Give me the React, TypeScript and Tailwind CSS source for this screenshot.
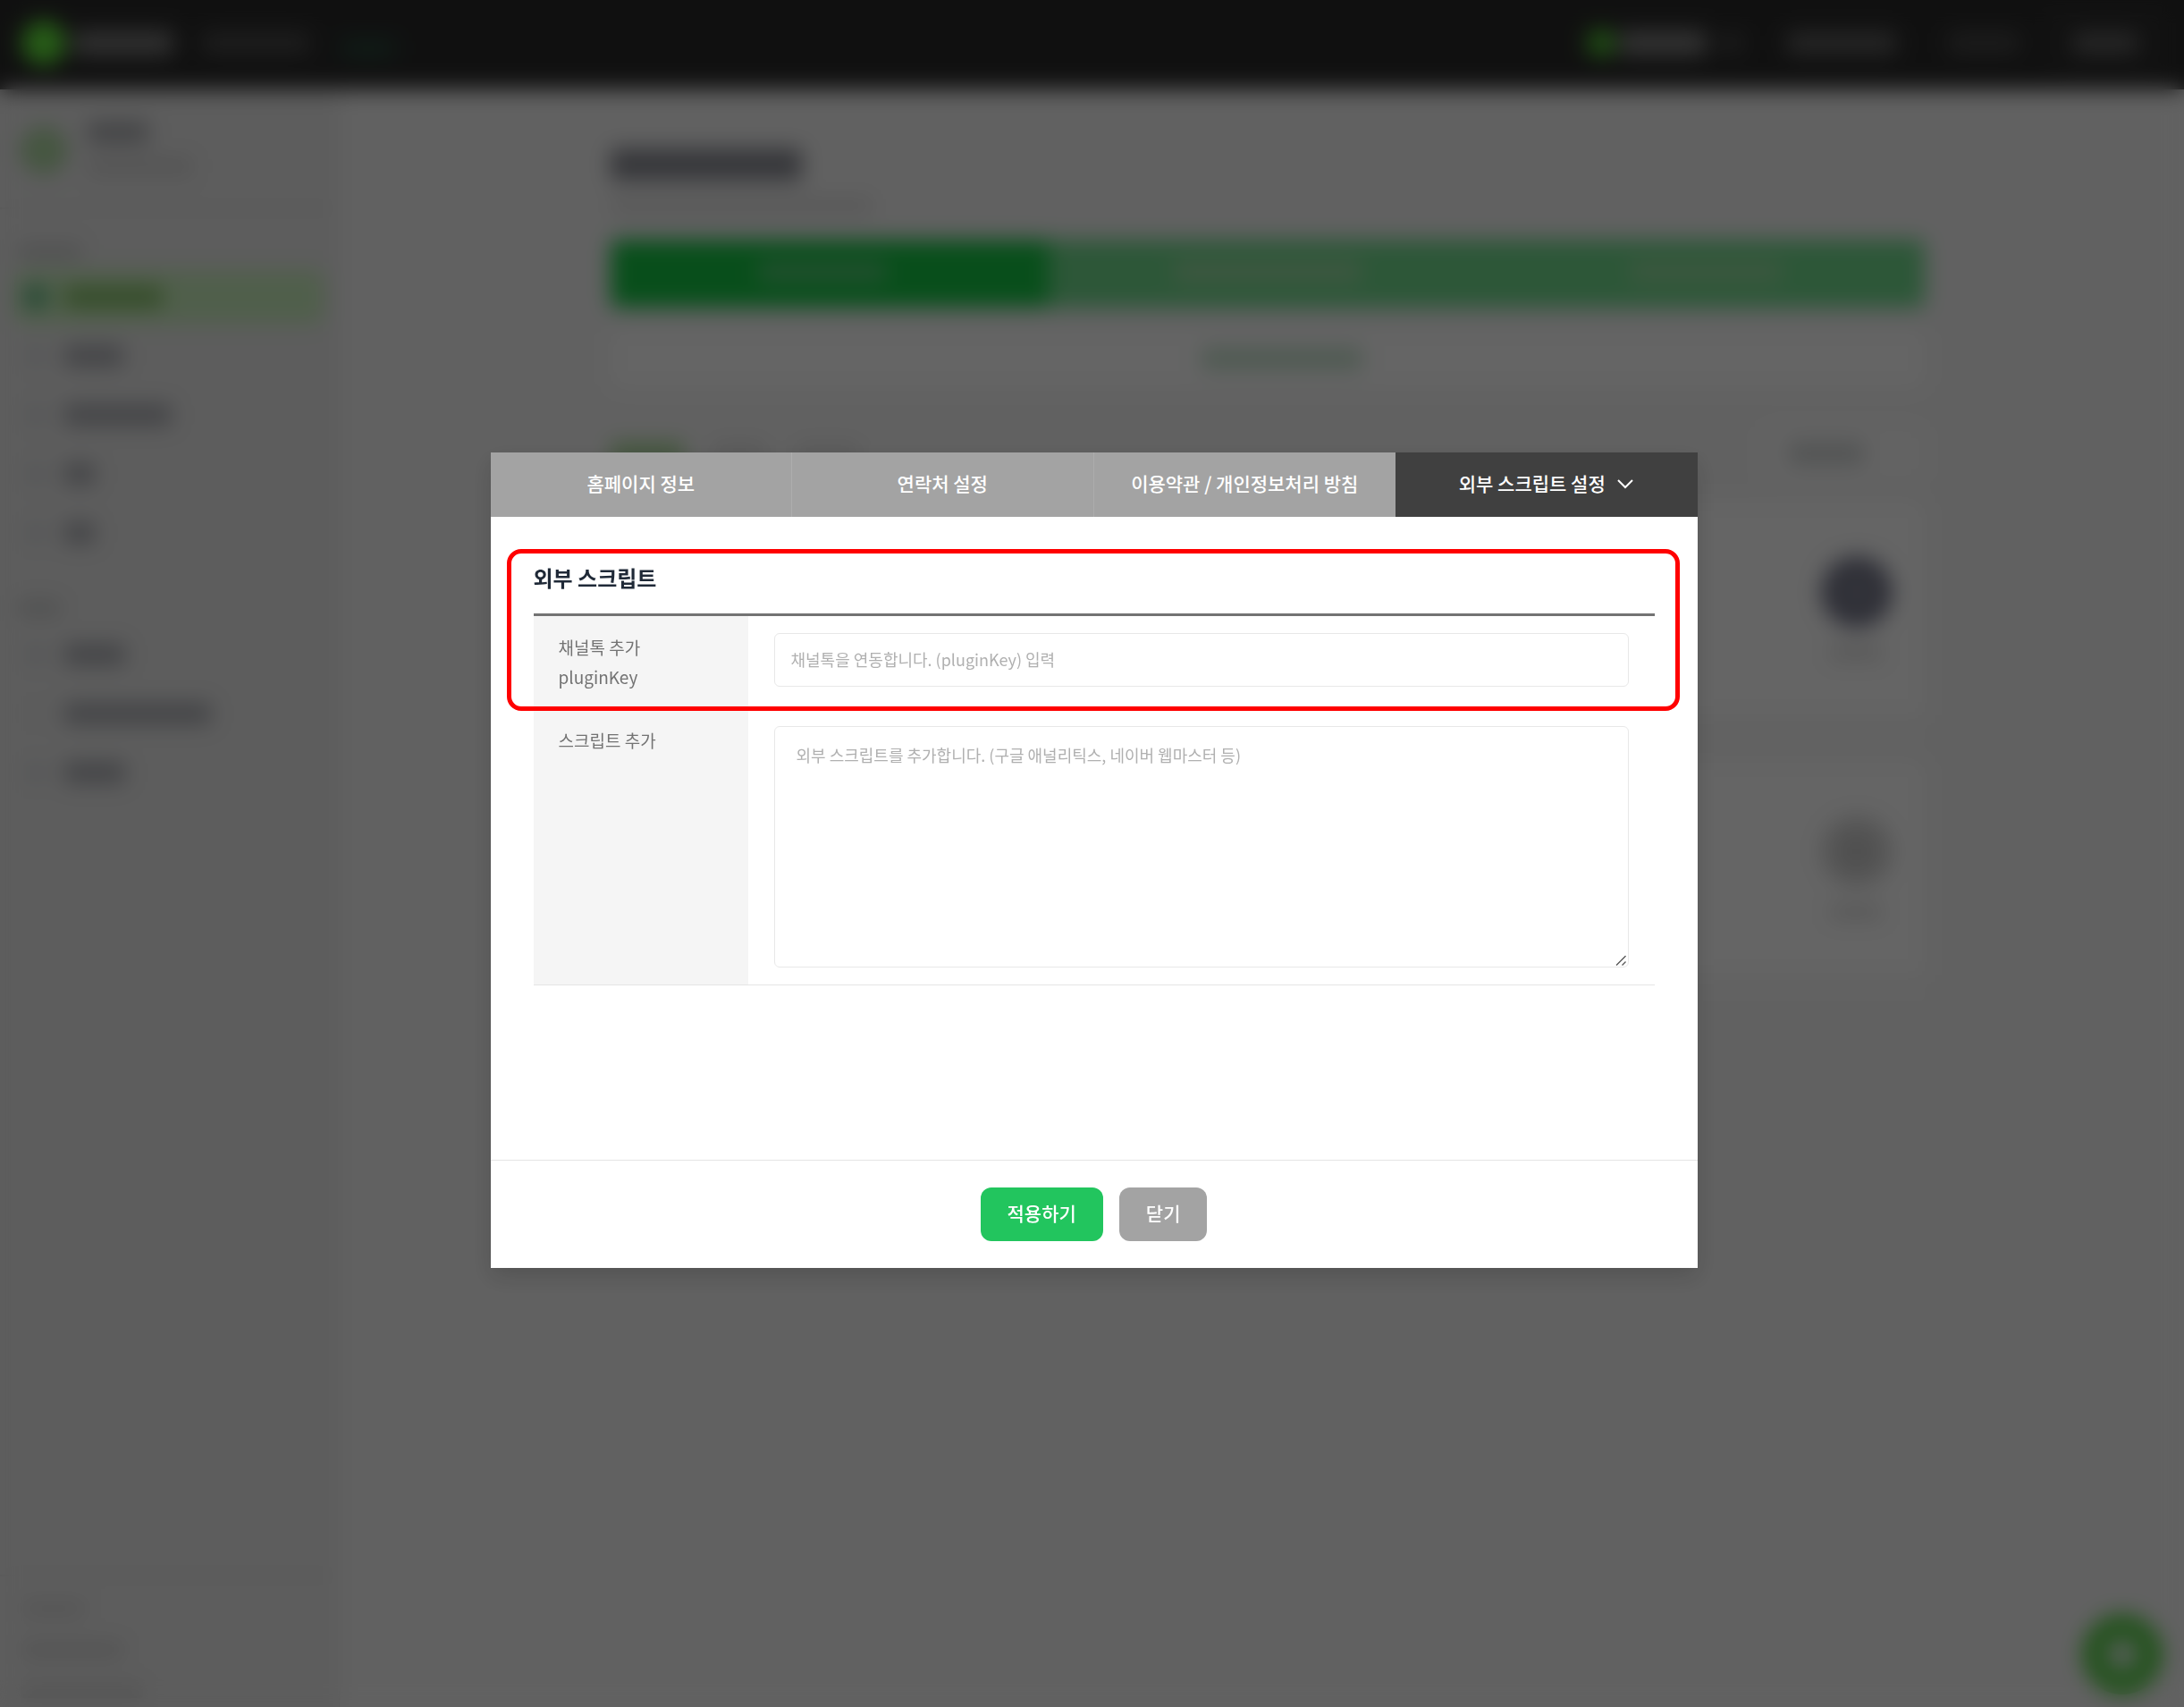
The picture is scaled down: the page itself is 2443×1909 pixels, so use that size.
import { useState } from "react";

const TABS = ["홈페이지 정보", "연락처 설정", "이용약관 / 개인정보처리 방침", "외부 스크립트 설정"];

function Bar({ className }: { className: string }) {
  return <div className={`rounded ${className}`} />;
}

function NavRow({ width, active = false, indent = false }: { width: string; active?: boolean; indent?: boolean }) {
  return (
    <div className={`flex h-[60px] items-center rounded-xl px-3 ${active ? "bg-[#c8eebc]" : ""}`}>
      <Bar className={`size-6 shrink-0 ${active ? "bg-[#58b080]" : indent ? "bg-[#e3e3e3]" : "bg-[#d8dadc]"}`} />
      <Bar className={`ml-5 h-6 ${active ? "bg-[#84be68]" : "bg-[#a8aab0]"} ${width}`} />
    </div>
  );
}

function TopBar() {
  return (
    <header className="flex h-[100px] shrink-0 items-center justify-between bg-[#2a2a2a] px-6 pb-1">
      <div className="flex items-center">
        <div className="size-[50px] rounded-full bg-[#62e83c]" />
        <Bar className="ml-2 h-7 w-[112px] bg-[#7a7a7a]" />
        <Bar className="ml-8 h-6 w-[120px] bg-[#4c4c4c]" />
        <Bar className="mt-3 ml-[36px] h-5 w-[60px] bg-[#28483a]" />
      </div>
      <div className="flex items-center">
        <div className="size-8 rounded-full bg-[#52c834]" />
        <Bar className="ml-1 h-7 w-[98px] bg-[#808080]" />
        <Bar className="ml-4 h-5 w-6 bg-[#4c4c4c]" />
        <Bar className="ml-[50px] h-6 w-[122px] bg-[#626262]" />
        <Bar className="ml-[58px] h-6 w-[80px] bg-[#484848]" />
        <div className="mt-1 mr-1 ml-9 flex h-[66px] w-[120px] items-center justify-center rounded-lg border-2 border-[#484848]">
          <Bar className="mb-1 h-6 w-[74px] bg-[#646464]" />
        </div>
      </div>
    </header>
  );
}

function Sidebar() {
  return (
    <aside className="flex w-[380px] shrink-0 flex-col justify-between border-r border-[#dedede] bg-[#e8e8e8]">
      <div>
        <div className="flex h-[134px] items-center gap-6 border-b-2 border-[#dcdcdc] px-6">
          <div className="mt-1 size-[50px] rounded-full border-8 border-[#98cc8a] bg-[#b4dca8]" />
          <div>
            <Bar className="h-6 w-[68px] bg-[#a8aaae]" />
            <Bar className="mt-4 h-5 w-[118px] bg-[#d2d2d2]" />
          </div>
        </div>
        <div className="px-4 pt-9">
          <Bar className="mt-1 ml-1 h-4 w-[72px] bg-[#c6c8c8]" />
          <div className="mt-3 flex flex-col gap-[6px]">
            <NavRow width="w-[110px]" active />
            <NavRow width="w-[66px]" />
            <NavRow width="w-[120px]" />
            <NavRow width="w-[34px]" />
            <NavRow width="w-[34px]" />
          </div>
          <Bar className="mt-[46px] ml-1 h-4 w-[48px] bg-[#c6c8c8]" />
          <div className="mt-[14px] flex flex-col gap-[6px]">
            <NavRow width="w-[68px]" />
            <NavRow width="w-[164px]" indent />
            <NavRow width="w-[68px]" />
          </div>
        </div>
      </div>
      <div className="flex h-[148px] flex-col gap-[30px] border-t-2 border-[#dcdcdc] px-6 pt-7">
        <Bar className="h-4 w-[72px] shrink-0 bg-[#d2d2d2]" />
        <Bar className="h-4 w-[114px] shrink-0 bg-[#cecece]" />
        <Bar className="h-4 w-[136px] shrink-0 bg-[#d2d2d2]" />
      </div>
    </aside>
  );
}

function SiteCard({ dot }: { dot: string }) {
  return (
    <div className="flex h-[270px] flex-col rounded-xl bg-[#fcfcfc]">
      <div className="flex flex-1 flex-col items-end justify-center pr-9">
        <div className={`flex size-[80px] items-center justify-center rounded-full ${dot}`}>
          <div className="size-8 rounded bg-[#a0a0a0]/30" />
        </div>
        <Bar className="mt-5 mr-3 h-4 w-[58px] bg-[#dadada]" />
      </div>
      <div className="h-[30px] rounded-b-xl bg-[#f4f4f4]" />
    </div>
  );
}

function Dashboard() {
  return (
    <main className="flex flex-1 justify-center bg-[#f3f3f3]">
      <div className="ml-3 w-full max-w-[1470px] pt-[66px]">
        <Bar className="h-9 w-[214px] bg-[#888a92]" />
        <Bar className="mt-[18px] h-5 w-[294px] bg-[#dedede]" />
        <div className="mt-7 grid h-[76px] grid-cols-3 overflow-hidden rounded-lg bg-[#70d98c]">
          <div className="flex justify-center bg-[#16c444] pt-6 pr-4">
            <Bar className="h-6 w-[144px] bg-[#54c774]" />
          </div>
          <div className="flex justify-center pt-6">
            <Bar className="h-6 w-[210px] bg-[#9cdba4]" />
          </div>
          <div className="flex justify-center pt-6">
            <Bar className="h-6 w-[170px] bg-[#96da9f]" />
          </div>
        </div>
        <div className="mt-6 flex h-[66px] items-center justify-center rounded-xl bg-[#fcfcfc]">
          <Bar className="ml-8 h-6 w-[180px] bg-[#c2dfca]" />
        </div>
        <div className="mt-10 flex h-[66px] items-center justify-between">
          <div className="flex gap-8">
            <Bar className="h-6 w-[82px] bg-[#a3d592]" />
            <Bar className="h-5 w-[60px] bg-[#dddddd]" />
            <Bar className="h-5 w-[74px] bg-[#e0e0e0]" />
          </div>
          <div className="flex h-[62px] w-[184px] items-center rounded-xl bg-[#f8f8f8] pl-8">
            <Bar className="h-6 w-[84px] bg-[#ccd0d0]" />
          </div>
        </div>
        <div className="mt-5 flex flex-col gap-5">
          <SiteCard dot="bg-[#74768a]" />
          <SiteCard dot="bg-[#d4d4d4]" />
        </div>
      </div>
    </main>
  );
}

function ScriptModal() {
  const [tab, setTab] = useState(3);
  return (
    <div
      role="dialog"
      aria-modal="true"
      aria-label="외부 스크립트 설정"
      className="w-full max-w-[1350px] bg-white shadow-[0_10px_24px_rgba(0,0,0,0.16)]"
    >
      <div role="tablist" className="grid grid-cols-4 bg-[#a3a3a3]">
        {TABS.map((name, i) => (
          <button
            key={name}
            type="button"
            role="tab"
            aria-selected={tab === i}
            onClick={() => setTab(i)}
            className={`flex h-[72px] items-center justify-center gap-3 pb-[2px] text-[21px] font-medium whitespace-nowrap text-white ${
              tab === i ? "bg-[#404040]" : i < 2 ? "border-r border-[#adadad]" : ""
            }`}
          >
            {name}
            {tab === i && (
              <svg viewBox="0 0 20 20" className="size-5" fill="none" stroke="currentColor" strokeWidth="2" aria-hidden="true">
                <path d="M2 6l8 8 8-8" />
              </svg>
            )}
          </button>
        ))}
      </div>

      <div className="relative min-h-[719px] px-12 pt-[50px]">
        <h2 className="text-2xl leading-9 font-bold text-[#1f2937]">외부 스크립트</h2>
        <table className="mt-[22px] w-full border-t-[3px] border-b border-t-[#737373] border-b-[#e5e5e5] text-[19px] text-[#737373]">
          <tbody>
            <tr>
              <th scope="row" className="w-[240px] bg-[#f5f5f5] px-7 pt-[18px] text-left align-top leading-[33px] font-normal">
                <label htmlFor="plugin-key">
                  채널톡 추가
                  <br />
                  pluginKey
                </label>
              </th>
              <td className="px-[29px] pt-[19px] pb-[25px]">
                <input
                  id="plugin-key"
                  type="text"
                  placeholder="채널톡을 연동합니다. (pluginKey) 입력"
                  className="block h-[60px] w-full rounded-md border border-[#e8e8e8] bg-white px-[18px] pb-[2px] text-lg outline-none placeholder:text-[#b0b0b0]"
                />
              </td>
            </tr>
            <tr>
              <th scope="row" className="bg-[#f5f5f5] px-7 pt-[18px] text-left align-top leading-[33px] font-normal">
                <label htmlFor="script-body">스크립트 추가</label>
              </th>
              <td className="px-[29px] pt-[19px] pb-[19px]">
                <div className="relative">
                  <textarea
                    id="script-body"
                    placeholder="외부 스크립트를 추가합니다. (구글 애널리틱스, 네이버 웹마스터 등)"
                    className="block h-[270px] w-full resize-none rounded-md border border-[#e8e8e8] bg-white px-6 py-4 text-lg leading-[30px] outline-none placeholder:text-[#b0b0b0]"
                  />
                  <svg
                    viewBox="0 0 12 12"
                    className="pointer-events-none absolute right-[3px] bottom-[2px] size-3"
                    fill="none"
                    stroke="#555555"
                    strokeWidth="1.3"
                    aria-hidden="true"
                  >
                    <path d="M1 11.500L11.500 1M7.500 11.500L11.500 7.500" />
                  </svg>
                </div>
              </td>
            </tr>
          </tbody>
        </table>
        <div className="pointer-events-none absolute top-9 right-5 left-[18px] h-[181px] rounded-2xl border-[5px] border-[#ff0000]" />
      </div>

      <div className="flex justify-center gap-[18px] border-t border-[#e5e5e5] py-[30px] text-[21px] font-medium text-white">
        <button type="button" className="h-[60px] rounded-xl bg-[#22c55e] px-[30px] pb-[2px]">
          적용하기
        </button>
        <button type="button" className="h-[60px] rounded-xl bg-[#a3a3a3] px-[30px] pb-[2px]">
          닫기
        </button>
      </div>
    </div>
  );
}

export default function App() {
  return (
    <div className="h-screen overflow-hidden font-['Noto_Sans_CJK_KR','Noto_Sans',sans-serif]">
      <div className="flex h-full flex-col" aria-hidden="true">
        <TopBar />
        <div className="flex flex-1">
          <Sidebar />
          <Dashboard />
        </div>
        <div className="fixed right-6 bottom-[14px] flex size-[90px] items-center justify-center rounded-full bg-[#54cc44]">
          <div className="size-9 rounded-full bg-[#d4ecd8]" />
        </div>
      </div>
      <div className="fixed inset-0 flex items-center justify-center bg-black/60 pt-[14px] pl-1 backdrop-blur-[12px]">
        <ScriptModal />
      </div>
    </div>
  );
}
